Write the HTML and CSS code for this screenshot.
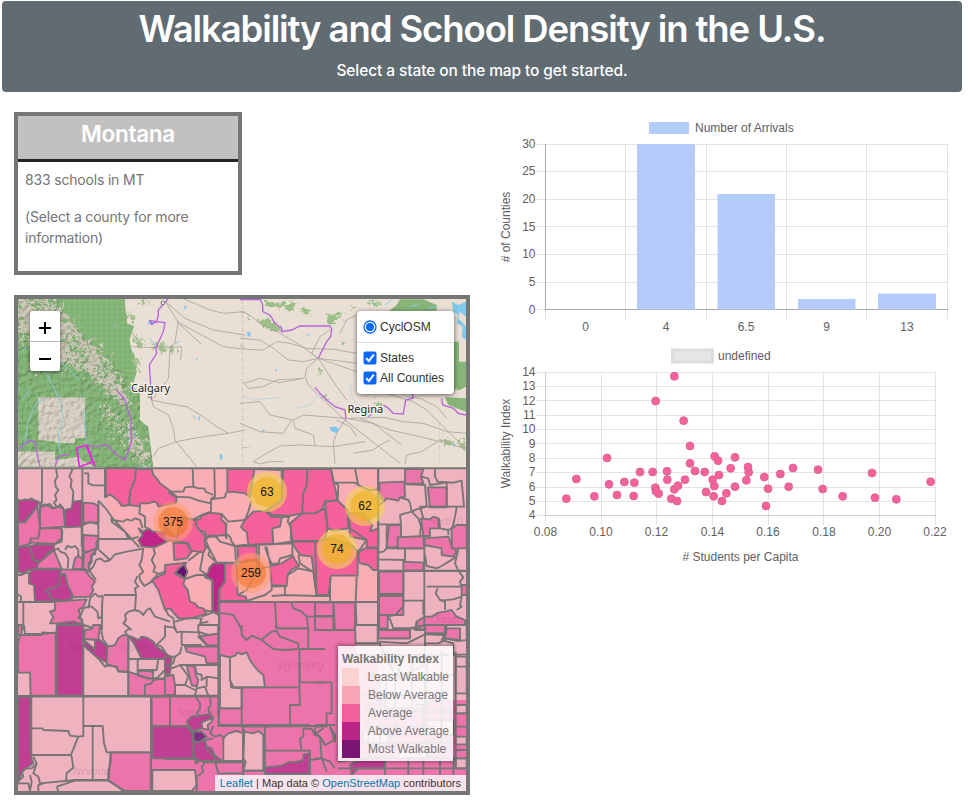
FILE: index.html
```
<!DOCTYPE html>
<html lang="en">
<head>
<meta charset="utf-8">
<title>Walkability and School Density in the U.S.</title>
<link rel="stylesheet" href="styles.css">
</head>
<body>
<header class="banner">
  <h1>Walkability and School Density in the U.S.</h1>
  <p>Select a state on the map to get started.</p>
</header>
<main class="layout">
  <section class="left">
    <article class="info">
      <h2>Montana</h2>
      <div class="info-body">
        <p>833 schools in MT</p>
        <p>(Select a county for more information)</p>
      </div>
    </article>
    <div class="map">
      <svg class="tiles" viewBox="18 299 448 492" width="448" height="492">
        <defs>
          <filter id="relief" x="0" y="0" width="1" height="1">
            <feTurbulence type="fractalNoise" baseFrequency=".07" numOctaves="5" seed="8" result="n"/>
            <feDiffuseLighting in="n" surfaceScale="7" lighting-color="#fff" result="l"><feDistantLight azimuth="225" elevation="58"/></feDiffuseLighting>
            <feComposite in="SourceGraphic" in2="l" operator="arithmetic" k1=".75" k2=".42" result="m"/>
            <feComposite in="m" in2="SourceGraphic" operator="in"/>
          </filter>
          <filter id="rough"><feTurbulence type="fractalNoise" baseFrequency=".08" numOctaves="4" seed="3"/><feDisplacementMap in="SourceGraphic" scale="36" xChannelSelector="R" yChannelSelector="G"/></filter>
          <filter id="ragged" x="-.3" y="-.3" width="1.6" height="1.6"><feTurbulence type="fractalNoise" baseFrequency=".07" numOctaves="4" seed="5"/><feDisplacementMap in="SourceGraphic" scale="110" xChannelSelector="R" yChannelSelector="G"/></filter>
          <pattern id="survey" width="16" height="16" patternUnits="userSpaceOnUse"><path d="M0 0H16M0 0V16" fill="none" stroke="#a3c592" stroke-width="2"/></pattern>
        </defs>
        <path fill="#e9dfd5" d="M18 299h448v170H18z"/>
        <g transform="translate(10 290) scale(.33333)">
          <path filter="url(#relief)" fill="#80ae74" d="M24 26H345L350 110 365 180 375 250 360 280 390 310 390 390 415 410 430 532H24z"/>
          <path fill="#80b274" d="M150 26H345V68L352 75 350 100 372 108 355 160 360 182 372 190 380 245 370 280 340 250 290 190 225 135 170 80z"/>
          <path fill="url(#survey)" d="M150 26H345V68L352 75 350 100 372 108 355 160 360 182 372 190 380 245 370 280 340 250 290 190 225 135 170 80z"/>
          <g filter="url(#relief)">
            <path fill="#cfc8bb" d="M84 322H225V445H195V460H135V455L85 450zM24 484H135V510L200 500 255 530H24z"/>
            <g filter="url(#ragged)" fill="#c4bfaf">
              <path d="M24 26H130L175 90 225 145 290 210 325 265 350 320 365 375 340 350 285 290 215 235 170 220 95 240 24 110z"/>
              <path d="M280 330L310 370 335 440 320 430 285 370zM340 380L400 470 420 530H395L350 460z"/>
            </g>
            <path filter="url(#ragged)" fill="#80ae74" d="M60 40L90 70 110 55 85 35zM150 130L190 150 240 210 220 215 170 175zM30 130L60 150 55 190 30 180zM110 220L145 225 160 260 130 250zM260 220L300 250 290 265 260 245z"/>
          </g>
          <path filter="url(#rough)" fill="#a6c18f" d="M350 60L375 80 370 105zM360 125L385 150 405 145 390 180zM425 160L470 165 465 180 455 190 450 180 425 175zM475 165L495 170 495 195 480 190zM365 195L390 210 382 250zM390 30L415 35 390 50z"/>
          <path class="water" d="M110 250L130 290 150 335 160 385 145 430 150 490M220 365L230 460M125 200L170 230 205 270M35 330L60 300M45 460L55 390 80 340 105 325M30 190L50 170M420 145L440 175M495 160L508 155M550 375L555 388"/>
          <path class="lake" d="M415 92l18 5-5 8-14-4zM523 45l8 8-8 6zM566 378l5 3-3 12-4-2zM628 492l10 3-2 15-6-2zM560 203l4 8-6-2zM312 102l8 4-6 4z"/>
          <path class="road" d="M467 35L500 90 510 100 640 170 705 178M500 95L575 163M467 35L525 85 610 120 705 135M520 26L600 60 640 70 705 65M505 95L495 155 480 180 475 265 430 325M365 170L440 173 515 170 512 210M425 330L430 350 475 375 490 415 495 450 560 530M425 330L460 338 530 350 580 380 620 410 655 430 705 420M430 500L445 475 500 455 560 443 655 430"/>
          <path class="seam" d="M697 26V530"/>
          <path class="cycle" d="M475 26L445 60V75L440 95 420 92 425 103 440 95 465 98 460 125 437 175 440 190 418 225 425 330M320 300L345 330 362 385 365 455 345 510 320 495 290 465 260 470 230 465M24 478L60 450 75 455 80 485 90 530M135 530L145 498 175 495"/>
          <path class="cycle hot" d="M230 465L200 475 208 530 250 515 230 465M230 470L255 530"/>
          <path class="place-dot" d="M454 34h9v9h-9zM415 313h9v9h-9z"/>
        </g>
        <g transform="translate(240 290) scale(.33333)">
          <g filter="url(#rough)" fill="#9cbf87">
            <path d="M75 35L165 40 155 70 125 50 90 55zM45 95L90 85 120 115 110 125 60 105zM180 50L215 60 205 75 185 65zM262 75L310 70 275 110 262 95zM375 35L425 35 410 50zM20 75L35 80 25 90zM330 45L350 55 340 60zM300 155L320 160 305 165z"/>
            <path d="M230 235h12v12h-12zM250 318h12v8h-12zM10 465h8v8h-8zM600 440L640 460 620 470zM650 455L678 450V480zM400 330L430 345 420 350z"/>
          </g>
          <path fill="#86b577" d="M480 28H550L590 45V65H445L470 45zM640 155H657V280L640 310zM650 215H678V290L660 300H650zM615 322L678 325V365L650 355 625 345z"/>
          <path class="lake" d="M635 35L655 45 678 35V80L660 65 655 85 678 110 678 150 665 140 668 110 650 100 655 75 640 65zM268 412l22-2 8 10-10 10-16-8zM22 125l10 2-2 14-8-4zM198 132l10 2-6 5zM65 418l10 2-5 8zM635 460l12 3-4 8zM310 85l6 8-6 0zM105 235l6 8-6 0z"/>
          <path class="water faint" d="M10 320L45 330 115 322M170 355L210 345 240 310M330 280L335 315 350 345"/>
          <path class="water" d="M435 45L455 30M510 50L535 42M560 55L590 50"/>
          <path class="road" d="M0 65L20 70 55 95 120 130 180 165 235 205 350 245M0 145L60 150 100 175 145 210 190 215 235 205 300 213 350 220M0 165L20 178 70 180 110 155 150 160 200 175 280 178 350 190M270 120L240 140 215 190 235 205 280 275 320 330M235 205L200 235 195 260 205 285 240 320 315 390 480 520M12 280L60 265 120 278 190 265M12 280L25 295 70 290 110 270 190 265M0 340L60 335 90 375 160 390 190 375 315 385M160 390L165 415 220 435 225 465M0 400L60 425 130 430 155 390M315 390L290 430 280 460 285 520M290 390L330 410 350 440M320 385L400 400 485 465M330 385L430 382 490 395 550 400 620 425 678 430M440 310L520 335 560 360 600 400 640 440 678 475M360 385L450 420 540 440 678 475M495 522L500 495 545 485 600 450 640 455M40 515L80 490 120 468 180 465 280 470 375 455M40 515L60 522 90 515 130 515M340 490L400 480 420 465 450 450M300 130L320 90 350 75M500 320L540 325 590 350 620 385"/>
          <path class="seam" d="M8 26V530M598 400V530"/>
          <path class="cycle" d="M0 29H62L68 45V65L90 75 105 100 125 115V125L155 120 180 108H270L275 118 272 140 260 155 250 175 242 190 235 205M225 292L240 310 260 330 285 350 315 360 318 388M385 380L395 372M430 345L445 355 460 370 490 372 497 330 518 325V300M605 325L608 345 640 355 655 370 678 375"/>
        </g>
        <path fill="#efb2bf" d="M18 468h448v323H18z"/>
        <path fill="#ec74aa" d="M219 603H356V660H378V700H466V791H152V697H219z"/>
        <path fill="#f9aeb5" d="M105.7 468H378V602H219L218 615 210 612 190 618 177 617 170 608 163 597 156.6 580 144 586 139 573 143 549 138 546 125 532 113 520 105.7 497z"/>

        <g class="counties" transform="translate(10 460) scale(.33333)">
          <path class="hi" d="M24 120L35 122 45 118 55 120 65 115 70 120 85 125 82 140 65 160 55 170 45 185 24 187z"/>
          <path class="mid" d="M82 140L90 200 85 235 60 242 62 250 24 262V187H45L65 160z"/>
          <path class="mid" d="M90 145L105 133 130 145 145 140 160 145 165 200 90 205z"/>
          <path class="hi" d="M165 150L185 145 188 125 215 122V200L165 202z"/>
          <path class="mid" d="M90 205H155V235L135 252 62 248 62 235 85 235z"/>
          <path class="mid" d="M220 128L250 130 265 138V188H235L220 195z"/>
          <path class="mid" d="M220 225L265 228V262L240 275H220z"/>
          <path class="hi" d="M24 262L60 258 70 300 90 308 80 328 55 330 40 340 24 335z"/>
          <path class="hi" d="M60 258L80 254H132V268L115 278 95 305 70 300z"/>
          <path class="mid" d="M85 310L132 270 142 295 155 326H80z"/>
          <path class="mid" d="M195 295L205 288 222 300 225 327H188z"/>
          <path class="mid" d="M222 280L258 265 255 282 245 285V300L235 310 240 335 220 325z"/>
          <path class="hi" d="M57 340L70 328H153L150 345 165 342 170 370 188 400 185 418 155 424H75L72 375 57 370z"/>
          <path class="mid" d="M153 328L225 330 240 350 255 365 245 380 250 390 240 410 190 412 175 385 165 342 150 345z"/>
          <path class="hi" d="M150 345L165 342 172 375 188 405 180 418 155 422 130 418 120 412 118 398 106 395 115 387 130 385 148 375z"/>
          <path class="mid" d="M135 425L230 418 220 440 205 450 212 465 205 472 218 480 210 495 190 485 145 490 120 490 130 470 120 455 135 450z"/>
          <path class="hi" d="M140 510L145 490 190 485 220 495V510z"/>
          <path class="mt-mid" d="M285 24H378L375 60 360 95 358 135 335 138 325 122 315 115 300 103 285 112z"/>
          <path class="mt-mid" d="M378 27H425L430 45 440 55 450 70 480 92 500 110 498 128 445 140 440 128 430 125 415 130 390 130V140L358 135 360 95 375 60z"/>
          <path class="mt-hi" d="M385 205L400 215 415 205 430 215 465 215 470 245 435 262 395 260 385 240 398 225z"/>
          <path d="M96 26V130M138 26L142 50 135 62 137 80 145 90 135 105 140 120 132 128 140 140M188 26L178 50 185 60 182 80 190 95 188 125M217 26V325M222 40H235V70L250 76H285M85 125L100 138 120 132 130 145 145 140 150 133 160 145M265 122L287 145 308 175 345 215 388 262M265 122V237L258 250 262 265 300 300 315 283 350 275 400 266M265 237H365L385 230M308 180L340 185 350 178 365 182 375 175 390 180 398 205M305 170V185L345 215 355 235M400 265L395 300 388 315 400 335 388 345 390 360 403 378 425 365 440 345 475 330M430 265L435 280 425 300 435 320 430 335 445 340M382 348L375 365 385 380 375 385 378 405H282M378 405L375 450 355 455 345 465 348 480 340 490 365 510M276 425V510M375 450L390 455 400 465 410 450 420 445 435 470 480 485M255 400L265 410 278 408 275 470 265 475 262 455 245 440 235 440M255 400L240 415 235 445M258 268L242 290 245 305 235 320 240 330 250 320 258 300 270 295 285 305 300 300M240 335L258 360M132 270L145 265 150 275 165 280 175 295 173 325M165 270L172 258 185 262 195 258 205 270 205 290M157 210L155 245 135 252M215 200V260M24 345L35 345 48 338 57 340M24 403L33 410V426M24 426H135M40 426V510M220 190L240 186 262 192M90 125V205M235 440L220 445 210 470 220 495 270 510M390 140L388 160 405 170 405 200 420 210"/>
        </g>
        <g class="counties" transform="translate(165 460) scale(.33333)">
          <path class="mt-mid" d="M187 27H268L255 112 240 100 200 95 187 97z"/>
          <path class="mt-mid" d="M0 200L35 235 45 175 90 180 100 192V205L122 230 118 240 122 265 115 278 78 272 70 250 45 245 0 240z"/>
          <path class="mt-mid" d="M25 248L65 250 80 275 65 295 28 300z"/>
          <path class="mt-mid" d="M0 315L65 308 30 342 60 357 55 372 68 390 75 425 90 430 100 442 115 445 125 462 75 475 40 475 15 445 0 450-20 390-40 360 0 340z"/>
          <path class="mt-max" d="M60 312L62 325 68 335 63 345 60 357 45 345 30 340 42 325z"/>
          <path class="mt-mid" d="M93 178L105 178 108 168 135 158 170 162 170 180 182 190 185 235 180 225 150 228 125 232 120 215 105 212 93 195z"/>
          <path class="mt-mid" d="M240 180L265 155 300 152 318 170 350 172 345 200 322 205 325 250 250 255 245 215 235 210 228 200z"/>
          <path class="mt-mid" d="M355 27H428L425 80 415 100 412 160 370 168 320 165 305 150 350 120z"/>
          <path class="mt-mid" d="M428 27H498L518 120 480 125 470 150 440 163 412 160 415 100 425 80z"/>
          <path class="mt-mid" d="M375 190L412 160 450 160 480 145 487 205 480 243 382 242z"/>
          <path class="mt-mid" d="M382 245H495V408H455L440 290 405 285 385 255z"/>
          <path class="mt-hi" d="M120 345L130 338 132 325 145 310H180V365L162 390 160 465 143 455 142 360 120 352z"/>
          <path class="mt-mid" d="M180 310H215L218 405 243 410 245 423H163L162 390 180 365z"/>
          <path class="mt-mid" d="M218 258H275V300L218 308z"/>
          <path class="mt-mid" d="M315 318L350 310 385 288 390 300 403 318 380 328 368 345 365 378 320 375z"/>
          <path d="M83 27L85 80 60 82 55 95 20 95 10 98M148 27L150 110 138 115M85 80L100 85 118 85 122 95 145 105M10 98L30 110 75 112 100 122 138 130M183 97L180 112 138 118V155M138 155L110 165 85 178 45 170M170 162L190 185 240 180 250 155 260 120M185 190L182 220 195 230 200 245 210 258 245 255M122 240L135 225 155 232 165 245 210 258 213 308H155L130 260 122 240M120 255L135 270 130 285 155 308M120 352V340L105 330 115 278M350 172L372 170 368 185 378 200V245L330 252M215 258L382 250V285L345 295 340 310 315 312 305 260M282 258V325L315 320M300 260L310 290 320 312M60 357L95 345 118 345 142 362V455L115 450M70 302L105 275M368 345L400 325 445 335 455 408 360 405M320 375V390L300 405 245 423M320 380L360 378V405L320 408M400 285L405 310 435 330 445 335M268 27L350 30 350 120M275 300V335L245 390 218 405M0 445L10 465 25 475 30 510M30 485L65 475 110 475 105 490 130 485M110 470L150 455 160 465M163 390V510M163 460H180L205 465 220 490 230 510M330 428L335 505H430L425 470 410 455 385 445 380 428M425 470H480"/>
        </g>
        <g class="counties" transform="translate(315 460) scale(.33333)">
          <path class="mt-mid" d="M30 125L68 122 98 150 100 205 55 212 38 205z"/>
          <path class="mt-mid" d="M100 160L145 160 172 195 165 215 190 205V262H155L155 240 105 230z"/>
          <path class="mt-mid" d="M132 275L150 265H188V330H175L160 315 135 310 130 290z"/>
          <path class="mt-mid" d="M0 245L50 235 110 255 128 275V347H48L40 408H5z"/>
          <path class="mid" d="M193 68L268 65 270 110 255 112 250 122 215 115 205 125 193 100z"/>
          <path class="mid" d="M270 27H325L318 50 325 70 270 72z"/>
          <path class="mid" d="M338 82H395V142H345z"/>
          <path class="mid" d="M222 195L258 195V230L245 262H215z"/>
          <path class="mid" d="M248 232L325 228 328 265H248z"/>
          <path class="mid" d="M318 175L345 178 355 170 370 175 372 205 345 205V228H325z"/>
          <path class="mid" d="M328 235L400 230 410 255 425 275 415 290 380 285V265L328 255z"/>
          <path class="mid" d="M410 205L425 195H455V265H410z"/>
          <path class="mid" d="M265 305L325 308V332H265z"/>
          <path class="mid" d="M192 335H265V402H192zM192 408H265V465H192zM192 465H218V505H192z"/>
          <path class="mid" d="M0 428H55V468H0zM0 470H55V510H0zM55 428H120V510H60z"/>
          <path class="mid" d="M305 485L330 470 350 470 370 458 390 455 410 450 425 470 450 480V510H300z"/>
          <path class="mid" d="M440 375H455V405H440z"/>
          <path d="M48 27L55 65 70 75 68 122M55 68H120L130 75 160 90 188 88M120 27L130 75M190 27V510M268 72L330 75 335 140 305 148 290 155 285 130 280 120 255 112M205 125L195 135M190 193H258L255 165 270 160 290 155 310 175 318 200 315 225M320 50L340 55 345 75 395 68V142M360 27V50L368 65 415 68 440 62 447 140H315L325 175M425 142L420 170 415 195 410 205 400 210 400 225M372 175L375 205 400 210M190 278L205 275 215 265H320M270 265V300L190 298M215 195V265M190 332H450M328 230V510M330 285L335 318 365 325 380 318 425 290 420 310 430 332M265 335V422H325V465M335 380H440L435 365 445 352 430 332M368 385L362 400 375 420 390 425V450M375 422L415 418 440 410 435 435 440 440 425 450M190 465L220 465 235 505H300M265 422V440L240 465 225 468M122 428L125 505H190M45 350V425M125 350L122 425M0 405H45M98 150L105 205 155 240 130 275M430 265L425 290M305 485V505"/>
        </g>
        <g class="counties" transform="translate(10 625) scale(.33333)">
          <path class="mid" d="M24 55L30 30H95L97 22 137 25V212H62L60 143H24zM24 0H35V30H24z"/>
          <path class="hi" d="M140 0H220V212H140z"/>
          <path class="mid" d="M225 15L245 12 250 0H270L265 45 222 42z"/>
          <path class="hi" d="M222 45L255 75 255 45 270 45 292 65V112L265 100 222 62z"/>
          <path class="mid" d="M292 65L315 60 325 40 340 30 355 32V140H325L320 125 290 120z"/>
          <path class="hi" d="M355 32L370 38 385 45 395 35 410 38 430 50 440 65 480 95V102H395L375 60z"/>
          <path class="mid" d="M355 140L400 155 480 165V212H355z"/>
          <path class="mid" d="M385 137L430 140 428 162 385 152z"/>
          <path class="hi" d="M24 215H60L62 390 70 415 40 435 24 470z"/>
          <path class="mid" d="M302 382H422V498H340L295 465z"/>
          <path class="mid" d="M425 215H480V303H425z"/>
          <path d="M42 0L45 27M45 27H95L140 22M222 62L265 100 285 125 300 120 320 128 325 138 352 142M355 212V35L345 20 360 10M272 0L275 25 280 45 295 65M355 102H465V135L440 160M383 102V150L420 162M445 102L440 135H385M405 212V180L425 175 430 165 460 160 480 145M465 0V35L440 60 455 65 475 95M24 213H480M64 215V390H182L185 395 190 428 170 445 168 470M220 213V333L205 335 182 392M64 310H97L100 315 175 318 180 332 205 335M220 303H278L282 355 290 382H302L303 410 295 440V465H195L90 475 85 455 70 445 80 415 65 430 50 430 35 440 40 455 24 470M248 305V465M70 395L80 415M140 485L145 498M85 498V480L100 475M140 485L195 467H295L345 498M60 450L65 470 60 498M24 475L55 475 60 498M298 382H425"/>
        </g>
        <g class="counties" transform="translate(165 625) scale(.33333)">
          <path class="low" d="M165 90L195 97 198 187 230 190V250H165z"/>
          <path class="low" d="M195 97L210 92 218 82 230 88 245 82 255 105 265 120 280 138 295 150 300 187H205L195 165z"/>
          <path class="hi" d="M-38 303H65L85 325V400H-38z"/>
          <path class="hi" d="M65 290L80 275 135 268 145 278 115 292 110 310 80 318z"/>
          <path class="hi" d="M85 345L120 348 125 365 140 370 148 390 172 408H95L88 400z"/>
          <path class="max" d="M85 320L110 320 125 335 100 353 85 345z"/>
          <path class="low" d="M110 292L145 278 140 290 128 300 130 315 112 310z"/>
          <path class="low" d="M175 338L190 325 215 318 235 325V408H175z"/>
          <path class="low" d="M238 320L265 325 280 318 295 330V437H235L242 410 235 400z"/>
          <path class="hi" d="M300 427L350 422 375 410 390 412 415 405V390L433 385V447H300z"/>
          <path class="low" d="M-38 435H90L95 480 80 498H-38z"/>
          <path class="mid" d="M0 155L25 150 30 180V210H0z"/>
          <path class="hi" d="M0 95L20 95 15 145 0 150z"/>
          <path class="mid" d="M65 120L90 125 92 150 100 165 95 185 80 180z"/>
          <path class="mid" d="M100 35L160 25V62L125 60z"/>
          <path class="mid" d="M60 65L160 65V115L125 115 120 95 65 80z"/>
          <path class="low" d="M100 0H160V25L130 30 100 20z"/>
          <path d="M0 212H160M160 0V303H480M0 5L30 8 35 22 50 20V60H110M50 20L100 22 110 40 125 60M50 65L45 85 30 95 25 115 10 120 20 130 45 120 75 120 160 120M30 95L0 95M45 120L60 140 70 155 60 180H30V212M60 180L90 195M90 125L95 145 110 150 110 165 125 155 160 160M90 212L95 190 120 185 130 212M125 155V185M92 215L105 235V250L95 265 100 270M135 215L138 240 130 250 135 270M165 250H230M230 190V300L238 320M200 187H403L405 240H375V300M403 187V70L405 172H480M230 0V30L245 45 260 32 275 38 290 45 300 35 320 20 335 18 345 35 400 55V72H480M290 45L325 72 360 75 400 72M335 10H430V70M330 0L340 10M235 305L480 303M300 305V450M300 377H435V448M410 377L405 340 415 335V310L440 312 450 330M465 335L470 400 435 405M450 305V330L465 335 480 360M145 303L135 325 150 335 165 330 180 340M60 300L75 315 85 330M0 402H95L120 412 110 425 115 440 95 455 95 500M120 412H235M150 410L160 445H235M150 410L145 390 125 375 120 345 145 340M235 410V470M235 437H300M95 400L90 412 100 415"/>
        </g>
        <g class="counties" transform="translate(315 625) scale(.33333)">
          <path class="low" d="M120 0H188V55H122zM330 28L385 30 390 45 370 55H325zM395 0L455 0V45L430 48 390 40zM422 95H455V125H422zM422 125H455V205H422zM422 240H455V265H422zM422 335H455V358H422zM422 400H455V430H422z"/>
          <path class="mid" d="M190 15H285V40H190zM330 0H390V25H330zM395 10H435V45L390 40z"/>
          <path class="low" d="M195 50L275 55 330 28V120L245 160 195 60zM215 160L330 160V250L210 250zM145 320H220V355H145zM330 285H415V330H330zM250 380H340V400H250z"/>
          <path class="hi" d="M105 420L130 405 210 398V430H130L110 450zM45 305L60 330V350z"/>
          <path d="M0 172H50V265H35V305H0M0 300H60M68 410L145 400H453M68 430H453M210 400V450M280 400V450M325 400V450M375 400V450M415 400V450M190 0V40H285V10L330 0M235 10H320M330 25H390M120 55H190M390 0V28L380 45 415 55V90L453 88M120 90H400M150 150H415M145 210H300M160 210V400M195 150V400M240 150V345M290 90V260M335 100V400M380 80V400M145 260H415M145 305H360M145 355H415M300 240L325 240V330L415 328M265 90L245 160 290 165M422 80V430M422 265H453M422 305H453M422 375H453M25 310L5 325 20 345 30 360 50 350 60 335M0 400H20L45 410 60 430M20 400L35 440"/>
        </g>
        <path class="state-line" d="M18 468.3H466M105.7 468V497M219 602H378M378 468V630M219 602V725H310M18 696.5H219M83 697V625M151 697V791M243 725V791M378 571H466"/>
        <g class="place">
          <text x="131" y="392">Calgary</text><text x="347.500" y="413">Regina</text>
        </g>
        <g class="ghost"><text x="69" y="651">Boise</text><text x="120" y="651">Idaho</text><text x="278" y="669">Wyoming</text><text x="177" y="716">Salt Lake</text><text x="73" y="775">Nevada</text><text x="429" y="525" textLength="34" lengthAdjust="spacingAndGlyphs">North D</text><text x="435" y="623" textLength="28" lengthAdjust="spacingAndGlyphs">South</text></g>
        <g class="clusters">
          <g class="orange"><circle cx="173" cy="522" r="20"/><circle cx="173" cy="522" r="15"/><text x="173" y="526">375</text></g>
          <g class="orange"><circle cx="251" cy="573" r="20"/><circle cx="251" cy="573" r="15"/><text x="251" y="577">259</text></g>
          <g class="gold"><circle cx="267" cy="492" r="20"/><circle cx="267" cy="492" r="15"/><text x="267" y="496">63</text></g>
          <g class="gold"><circle cx="365" cy="506" r="20"/><circle cx="365" cy="506" r="15"/><text x="365" y="510">62</text></g>
          <g class="gold"><circle cx="337" cy="549" r="20"/><circle cx="337" cy="549" r="15"/><text x="337" y="553">74</text></g>
        </g>
      </svg>
      <div class="zoom"><span><svg width="14" height="14" viewBox="0 0 14 14"><path d="M1 7H13M7 1V13"/></svg></span><span><svg width="14" height="14" viewBox="0 0 14 14"><path d="M1 7H13"/></svg></span></div>
      <div class="layers">
        <label><svg width="14" height="14" viewBox="0 0 14 14"><circle cx="7" cy="7" r="6" fill="#fff" stroke="#0b69fa" stroke-width="1.300"/><circle cx="7" cy="7" r="4" fill="#0b69fa"/></svg>CyclOSM</label>
        <hr>
        <label><svg width="14" height="14" viewBox="0 0 14 14"><rect x=".5" y=".5" width="13" height="13" rx="2" fill="#0b69fa"/><path d="M3.300 7.300L5.900 10 10.800 3.700" fill="none" stroke="#fff" stroke-width="2"/></svg>States</label>
        <label><svg width="14" height="14" viewBox="0 0 14 14"><rect x=".5" y=".5" width="13" height="13" rx="2" fill="#0b69fa"/><path d="M3.300 7.300L5.900 10 10.800 3.700" fill="none" stroke="#fff" stroke-width="2"/></svg>All Counties</label>
      </div>
      <div class="legend">
        <b>Walkability Index</b>
        <div class="row"><i class="c1"></i>Least Walkable</div>
        <div class="row"><i class="c2"></i>Below Average</div>
        <div class="row"><i class="c3"></i>Average</div>
        <div class="row"><i class="c4"></i>Above Average</div>
        <div class="row"><i class="c5"></i>Most Walkable</div>
      </div>
      <div class="attribution"><a>Leaflet</a> | Map data © <a>OpenStreetMap</a> contributors</div>
    </div>
  </section>
  <section class="charts">
    <svg class="chart" viewBox="484 112 484 228" width="484" height="228">
      <path class="grid" d="M536 144.500H948M536 171.500H948M536 199.500H948M536 226.500H948M536 254.500H948M536 282.500H948M625.500 144V319M706.500 144V319M786.500 144V319M866.500 144V319M947.500 144V319M545.500 310V319M536 309.500H545"/>
      <path class="axis" d="M545.500 144V310M545 309.500H948"/>
      <path fill="#b5cbfc" d="M649 122h40v12h-40zM637 144h58v165.500h-58zM717.500 194h57.500v115.500h-57.500zM798 299h57.500v10.500H798zM878 293.500h58v16h-58z"/>
      <text x="695" y="132">Number of Arrivals</text>
      <g class="end"><text x="535.500" y="148">30</text><text x="535.500" y="175">25</text><text x="535.500" y="203">20</text><text x="535.500" y="231">15</text><text x="535.500" y="258">10</text><text x="535.500" y="286">5</text><text x="535.500" y="314">0</text></g>
      <g class="center"><text x="585.500" y="331">0</text><text x="666" y="331">4</text><text x="746" y="331">6.5</text><text x="826.500" y="331">9</text><text x="907" y="331">13</text><text transform="translate(509.500 227) rotate(-90)">#  of Counties</text></g>
    </svg>
    <svg class="chart" viewBox="484 340 484 235" width="484" height="235">
      <path class="grid" d="M536 372.500H935M536 386.500H935M536 400.500H935M536 415.500H935M536 429.500H935M536 443.500H935M536 458.500H935M536 472.500H935M536 487.500H935M536 501.500H935M536 515.500H545M601.500 372V525M656.500 372V525M712.500 372V525M768.500 372V525M823.500 372V525M879.500 372V525M935.500 372V525M545.500 515V525"/>
      <path class="axis soft" d="M545.500 372V516M545 515.500H936"/>
      <rect x="672.500" y="350" width="40" height="12" fill="#e5e5e5" stroke="#ddd" stroke-width="3"/>
      <text x="718" y="360">undefined</text>
      <g class="end"><text x="535.500" y="376">14</text><text x="535.500" y="390">13</text><text x="535.500" y="405">12</text><text x="535.500" y="419">11</text><text x="535.500" y="433">10</text><text x="535.500" y="448">9</text><text x="535.500" y="462">8</text><text x="535.500" y="476">7</text><text x="535.500" y="491">6</text><text x="535.500" y="505">5</text><text x="535.500" y="519">4</text></g>
      <g class="center"><text x="545.500" y="536">0.08</text><text x="601" y="536">0.10</text><text x="656.500" y="536">0.12</text><text x="712.500" y="536">0.14</text><text x="768" y="536">0.16</text><text x="824" y="536">0.18</text><text x="879.500" y="536">0.20</text><text x="935" y="536">0.22</text><text x="740.500" y="561">#  Students per Capita</text><text transform="translate(509.500 443.500) rotate(-90)">Walkability Index</text></g>
      <g id="points"></g>
    </svg>
  </section>
</main>
<script src="chart.js"></script>
</body>
</html>
```
FILE: chart.js
```
// Scatter points in thirds of a pixel, measured from the chart's corner (484, 335).
const points = [[247,491],[277,432],[331,484],[369,369],[375,448],[399,480],[421,441],[451,443],[449,483],[468,411],[506,411],[571,124],[515,198],[599,257],[618,333],[618,385],[633,408],[549,409],[550,434],[514,458],[524,476],[516,469],[571,463],[582,452],[562,491],[579,498],[603,434],[662,411],[666,471],[702,377],[692,364],[705,420],[691,453],[686,434],[689,484],[714,498],[727,475],[740,400],[753,367],[753,455],[787,436],[794,412],[792,396],[841,426],[852,461],[846,513],[889,417],[914,455],[927,399],[1002,404],[1016,462],[1076,484],[1164,414],[1173,488],[1237,493],[1340,440]];
const layer = document.getElementById("points");
for (const [x, y] of points) {
  const dot = document.createElementNS("http://www.w3.org/2000/svg", "circle");
  dot.setAttribute("cx", 484 + x / 3);
  dot.setAttribute("cy", 335 + y / 3);
  dot.setAttribute("r", 4);
  layer.append(dot);
}
```
FILE: styles.css
```
* { box-sizing: border-box; }
body { margin: 0; background: #fff; font-family: Inter, "Liberation Sans", sans-serif; width: 968px; height: 800px; overflow: hidden; }
.banner { margin: 1px 6px 0 2px; height: 91px; background: #616b72; border-radius: 4px; color: #fff; text-align: center; padding-top: 4px; }
.banner h1 { margin: 0; font-size: 36.5px; line-height: 48px; font-weight: 600; letter-spacing: -1.1px; }
.banner p { margin: 6px 0 0; font-size: 15.5px; line-height: 24px; font-weight: 500; letter-spacing: -.1px; }
.layout { display: flex; padding-top: 20px; }
.left { width: 470px; padding-left: 14px; flex: none; }
.info { width: 228px; height: 163px; border: 4px solid #767676; }
.info h2 { margin: 0; height: 46px; background: #c3c1c0; border-bottom: 3px solid #212529; color: #fff; font-size: 22.5px; line-height: 35px; font-weight: 600; text-align: center; letter-spacing: -.3px; }
.info-body { padding: 7px 7px; color: #757575; font-size: 14px; line-height: 21px; letter-spacing: -.18px; }
.info-body p { margin: 0 0 16px; }
.map { position: relative; margin-top: 20px; width: 456px; height: 500px; border: 4px solid #767676; overflow: hidden; font-family: "Liberation Sans", sans-serif; }
.tiles { display: block; }
.water { fill: none; stroke: #90c8d8; stroke-width: 3; stroke-linejoin: round; }
.faint { stroke: #a9d2e2; stroke-width: 2; }
.lake { fill: #80c8ec; }
.road { fill: none; stroke: #aaa49e; stroke-width: 2.5; stroke-linejoin: round; }
.seam { fill: none; stroke: #cdc5bd; stroke-width: 2; stroke-dasharray: 14 8; }
.cycle { fill: none; stroke: #b665d8; stroke-width: 4; }
.hot { stroke: #ee22e9; stroke-width: 5; }
.place-dot { fill: #fff; stroke: #777; stroke-width: 3; }
.place { font: 11px "Noto Sans", sans-serif; fill: #222; stroke: #f5f0eb; stroke-width: 2.5px; paint-order: stroke; }
.counties { fill: none; stroke: #767676; stroke-width: 5.6; stroke-linejoin: round; }
.low { fill: #efb2bf; }
.mid { fill: #ec74aa; }
.hi { fill: #c03f92; }
.max { fill: #7d2f86; }
.mt-mid { fill: #f5629b; }
.mt-hi { fill: #c2258a; }
.mt-max { fill: #651072; }
.state-line { fill: none; stroke: #767676; stroke-width: 2; }
.ghost { font: italic 11px "Noto Sans", sans-serif; fill: #6c3058; opacity: .17; }
.clusters { font-size: 12px; fill: #151515; text-anchor: middle; }
.orange circle { fill: #f18017; fill-opacity: .5; }
.orange circle:first-child { fill: #fd9c73; fill-opacity: .6; }
.orange circle + circle { fill: #f16d18; }
.gold circle { fill: #f0c20c; fill-opacity: .6; }
.gold circle:first-child { fill: #f1d357; }
.gold circle + circle { fill: #ecb31c; }
.zoom { position: absolute; left: 12px; top: 12px; width: 30px; height: 60px; background: #fff; border-radius: 2px; box-shadow: 0 1px 4px #0008; }
.zoom span { display: flex; height: 30px; align-items: center; justify-content: center; padding-top: 4px; }
.zoom span + span { border-top: 1px solid #bbb; }
.zoom path { fill: none; stroke: #000; stroke-width: 2; }
.layers { position: absolute; left: 339px; top: 12px; width: 97px; height: 83px; padding: 6px 6px; background: #fff; border-radius: 4px; box-shadow: 0 1px 5px #0009; font-size: 12px; color: #333; }
.layers label { display: flex; align-items: center; gap: 3px; height: 20px; white-space: nowrap; }
.layers hr { border: 0; border-top: 1px solid #ddd; margin: 5px -6px 5px; }
.legend { position: absolute; left: 320px; top: 347px; width: 115px; height: 115px; padding: 4px; background: #ffffffd9; box-shadow: 0 0 4px 1px #0006; font-size: 12px; line-height: 18px; color: #767676; white-space: nowrap; }
.legend b { display: block; }
.row { display: flex; height: 18px; gap: 8px; }
.row i { width: 18px; height: 18px; }
.c1 { background: #fcd2d1; }
.c2 { background: #f9a4b4; }
.c3 { background: #f1609c; }
.c4 { background: #b92686; }
.c5 { background: #791574; }
.attribution { position: absolute; right: 0; bottom: 0; height: 16px; padding: 0 5px; font-size: 11px; letter-spacing: .02px; line-height: 16px; color: #333; background: #ffffffcc; white-space: nowrap; }
.attribution a { color: #0078a8; }
.charts { width: 484px; margin-left: 14px; flex: none; }
.chart { display: block; font: 12px "Liberation Sans", sans-serif; fill: #606060; }
.grid { fill: none; stroke: #e3e3e3; }
.axis { fill: none; stroke: #aaa; }
.soft { stroke: #ccc; }
.end { text-anchor: end; }
.center { text-anchor: middle; }
#points { fill: #f5629b; stroke: #cf6590; stroke-width: .8; }
```
